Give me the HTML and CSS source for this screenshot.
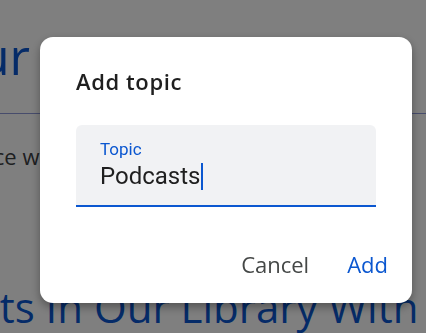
FILE: index.html
```html
<!DOCTYPE html>
<html lang="en">
<head>
    <meta charset="UTF-8">
    <meta name="viewport" content="width=device-width, initial-scale=1.0">
    <title>Add topic</title>
    <link rel="stylesheet" href="styles.css">
</head>
<body>
    <div class="page">
        <h1 class="hero">Our</h1>
        <hr class="rule">
        <p class="lede">voice with</p>
        <h2 class="shelf">Podcasts In Our Library With</h2>
    </div>

    <div class="scrim"></div>

    <div class="dialog" role="dialog" aria-labelledby="dialog-title">
        <h2 class="dialog-title" id="dialog-title">Add topic</h2>
        <label class="field">
            <span class="field-label">Topic</span>
            <span class="field-value">Podcasts<span class="caret"></span></span>
        </label>
        <div class="actions">
            <button class="text-button cancel">Cancel</button>
            <button class="text-button confirm">Add</button>
        </div>
    </div>
</body>
</html>
```

FILE: styles.css
```css
body {
    margin: 0;
    padding: 0;
    height: 100vh;
    overflow: hidden;
    background-color: #ffffff;
    font-family: "Open Sans", Roboto, sans-serif;
}

.page {
    width: 100%;
}

.hero {
    margin: 0 0 0 -60px;
    padding-top: 26px;
    font-size: 50px;
    font-weight: 400;
    line-height: 60px;
    color: #0b57d0;
    white-space: nowrap;
}

.rule {
    margin: 27px 0 0 0;
    border: none;
    border-top: 1px solid #8e98d8;
}

.lede {
    margin: 27px 0 0 -36px;
    font-size: 22px;
    color: #3c4043;
    white-space: nowrap;
}

.shelf {
    margin: 110px 0 0 -140px;
    font-size: 42px;
    font-weight: 400;
    line-height: 52px;
    color: #0b57d0;
    white-space: nowrap;
}

.scrim {
    position: fixed;
    inset: 0;
    background-color: rgba(0, 0, 0, 0.5);
}

.dialog {
    position: fixed;
    left: 40px;
    top: 37px;
    width: 372px;
    box-sizing: border-box;
    padding: 30px 36px 24px 36px;
    background-color: #ffffff;
    border-radius: 13px;
    box-shadow: 0 4px 10px rgba(0, 0, 0, 0.35);
    display: flex;
    flex-direction: column;
}

.dialog-title {
    margin: 0;
    font-size: 22px;
    font-weight: 600;
    letter-spacing: 0.6px;
    line-height: 28px;
    color: #1f1f1f;
}

.field {
    margin-top: 30px;
    height: 82px;
    box-sizing: border-box;
    padding: 13px 24px 0 24px;
    background-color: #f1f2f4;
    border-radius: 6px 6px 0 0;
    border-bottom: 2px solid #0b57d0;
    display: flex;
    flex-direction: column;
    font-family: Roboto, sans-serif;
}

.field-label {
    font-size: 17px;
    line-height: 22px;
    color: #0b57d0;
}

.field-value {
    font-size: 24px;
    line-height: 32px;
    color: #1f1f1f;
    display: flex;
    align-items: center;
}

.caret {
    display: inline-block;
    width: 2px;
    height: 27px;
    margin-left: 1px;
    background-color: #0b57d0;
}

.actions {
    margin: 42px -12px 0 0;
    display: flex;
    justify-content: flex-end;
    gap: 38px;
}

.text-button {
    font-family: "Open Sans", Roboto, sans-serif;
    font-size: 22px;
    font-weight: 500;
    line-height: 30px;
    padding: 0;
    background: none;
    border: none;
    cursor: pointer;
}

.cancel {
    color: #444746;
}

.confirm {
    color: #0b57d0;
}
```
